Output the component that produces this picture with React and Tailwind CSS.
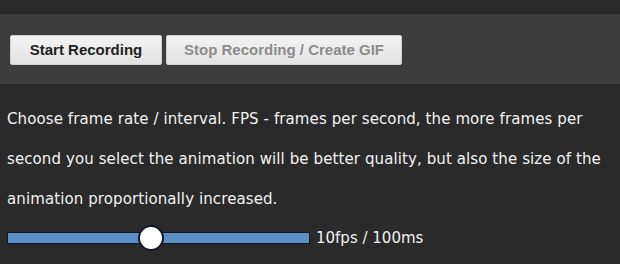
import React from 'react';

const App = () => {
    return (
        <div className="w-[620px] h-[264px] bg-[#2a2a2a] overflow-hidden font-['DejaVu_Sans',sans-serif]">
            {/* Top strip */}
            <div className="h-[14px] bg-[#2b2b2b] border-b border-[#262626]"></div>

            {/* Toolbar */}
            <div className="h-[70px] bg-[#3c3c3c] flex items-center gap-[4px] px-[10px] pt-[2px]">
                <button className="w-[152px] h-[30px] rounded-[2px] bg-gradient-to-b from-[#f4f4f4] to-[#e2e2e2] border border-[#d0d0d0] text-[#222] text-[15px] font-bold font-['Liberation_Sans',Arial,sans-serif]">
                    Start Recording
                </button>
                <button className="w-[236px] h-[30px] rounded-[2px] bg-gradient-to-b from-[#f4f4f4] to-[#e2e2e2] border border-[#d0d0d0] text-[#8c8c8c] text-[15px] font-bold font-['Liberation_Sans',Arial,sans-serif]">
                    Stop Recording / Create GIF
                </button>
            </div>

            {/* Description */}
            <div className="px-[7px] pt-[15px]">
                <p className="w-[606px] text-[#f2f2f2] text-[15px] leading-[40px] tracking-[0.1px]">
                    Choose frame rate / interval. FPS - frames per second, the more frames per second you select the animation will be better quality, but also the size of the animation proportionally increased.
                </p>

                {/* Slider */}
                <div className="flex items-center mt-[8px]">
                    <div className="relative w-[303px] h-[12px] bg-[#5b8fc6] border border-[#0f1626]">
                        <div className="absolute left-[130px] top-[-8px] w-[26px] h-[26px] rounded-full bg-white border-2 border-[#11182b]"></div>
                    </div>
                    <span className="ml-[6px] text-[#f2f2f2] text-[15px]">10fps / 100ms</span>
                </div>
            </div>
        </div>
    );
};

export default App;
